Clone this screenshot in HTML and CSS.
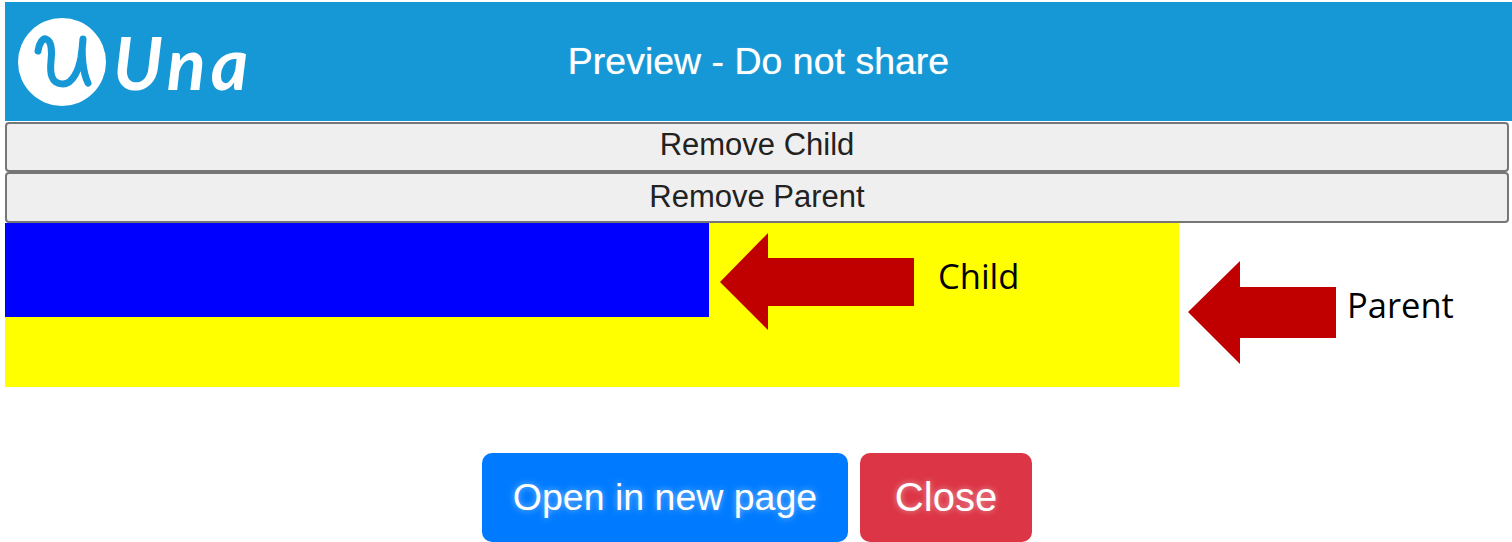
FILE: index.html
```html
<!DOCTYPE html>
<html lang="en">
<head>
  <meta charset="UTF-8">
  <meta name="viewport" content="width=device-width, initial-scale=1.0">
  <title>Preview - Do not share</title>
  <link rel="stylesheet" href="styles.css">
</head>
<body>
  <div class="topbar">
    <div class="logo">
      <svg class="logo-mark" width="90" height="90" viewBox="0 0 90 90" aria-hidden="true">
        <circle cx="45" cy="45" r="44" fill="#fff"/>
        <path d="M21 34 C22 26 26 21 29 22 C35 24 35 36 34 44 C33 54 33 67 46 67 C56 67 62 52 64 40 C65 32 66 26 66 22 C64 36 66 56 71 66" fill="none" stroke="#1798d6" stroke-width="7" stroke-linecap="round" stroke-linejoin="round"/>
      </svg>
      <span class="logo-text">Una</span>
    </div>
    <div class="title">Preview - Do not share</div>
  </div>

  <button class="remove-button">Remove Child</button>
  <button class="remove-button">Remove Parent</button>

  <section class="demo">
    <div class="parent">
      <div class="child"></div>
    </div>

    <svg class="arrow arrow-child" width="195" height="98" viewBox="0 0 195 98" aria-hidden="true">
      <polygon points="0,49 48,0 48,25 194,25 194,73 48,73 48,97" fill="#c00000"/>
    </svg>
    <span class="note note-child">Child</span>

    <svg class="arrow arrow-parent" width="149" height="104" viewBox="0 0 149 104" aria-hidden="true">
      <polygon points="0,51 52,0 52,26 148,26 148,77 52,77 52,103" fill="#c00000"/>
    </svg>
    <span class="note note-parent">Parent</span>
  </section>

  <div class="actions">
    <a class="btn btn-primary" href="#">Open in new page</a>
    <a class="btn btn-danger" href="#">Close</a>
  </div>
</body>
</html>
```

FILE: styles.css
```css
html,
body {
  height: 100%;
}

body {
  font-family: "Liberation Sans", Arial, sans-serif;
  margin: 0;
  padding: 2px 3px 0 5px;
  box-sizing: border-box;
  overflow: hidden;
  background-color: #ffffff;
}

.topbar {
  display: grid;
  grid-template-columns: 1fr auto 1fr;
  align-items: center;
  height: 119px;
  margin-right: -3px;
  background-color: #1798d6;
  color: #ffffff;
}

.logo {
  display: flex;
  align-items: center;
  gap: 6px;
  padding-left: 12px;
}

.logo-text {
  font-family: "Lato", sans-serif;
  font-style: italic;
  font-weight: 700;
  font-size: 72px;
  letter-spacing: 5px;
  line-height: 1;
}

.title {
  font-size: 37.5px;
  text-shadow: 0 0 1px rgba(255, 255, 255, 0.6);
}

.remove-button {
  display: block;
  width: 100%;
  height: 50px;
  margin-top: 1px;
  padding: 0 0 5px;
  box-sizing: border-box;
  font-family: "Liberation Sans", Arial, sans-serif;
  font-size: 31px;
  color: #222222;
  background-color: #efefef;
  border: 2px solid #767676;
  border-radius: 4px;
}

.remove-button + .remove-button {
  height: 51px;
  margin-top: 0;
  padding-bottom: 1px;
}

.demo {
  position: relative;
}

.parent {
  width: 1174px;
  height: 164px;
  background-color: #ffff00;
}

.child {
  width: 704px;
  height: 94px;
  background-color: #0000ff;
}

.arrow {
  position: absolute;
}

.arrow-child {
  left: 715px;
  top: 10px;
}

.arrow-parent {
  left: 1183px;
  top: 38px;
}

.note {
  position: absolute;
  font-family: "Open Sans", sans-serif;
  font-size: 34.5px;
  line-height: 1;
  color: #000000;
}

.note-child {
  left: 933px;
  top: 36px;
}

.note-parent {
  left: 1342px;
  top: 65px;
}

.actions {
  display: flex;
  justify-content: center;
  gap: 12px;
  margin-top: 66px;
}

.btn {
  display: flex;
  align-items: center;
  justify-content: center;
  height: 89px;
  box-sizing: border-box;
  font-size: 37.5px;
  color: #ffffff;
  text-decoration: none;
  border-radius: 10px;
  text-shadow: 0 0 6px rgba(255, 255, 255, 0.5);
}

.btn-primary {
  width: 366px;
  background-color: #007bff;
}

.btn-danger {
  width: 172px;
  font-size: 40px;
  background-color: #dc3545;
}
```
